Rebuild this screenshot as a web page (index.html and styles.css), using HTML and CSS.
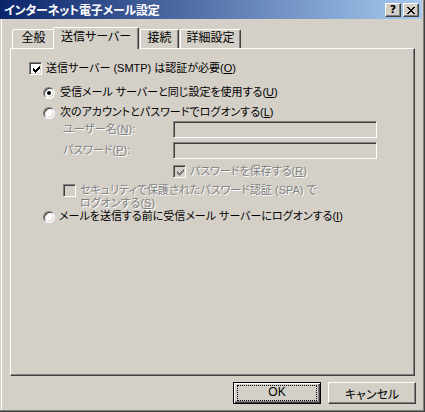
FILE: index.html
```html
<!doctype html>
<html>
  <head>
    <meta charset="utf-8">
    <title>インターネット電子メール設定</title>
    <link rel="stylesheet" href="styles.css">
  </head>

  <body>
    <div class="window">
      <div class="titlebar">
        <span class="title">インターネット電子メール設定</span>
        <div class="capButtons">
          <span class="capBtn help">?</span>
          <span class="capBtn close">
            <svg width="8" height="7" viewBox="0 0 8 7"><path d="M0 0h2v1H0zM6 0h2v1H6zM1 1h2v1H1zM5 1h2v1H5zM2 2h4v1H2zM3 3h2v1H3zM2 4h4v1H2zM1 5h2v1H1zM5 5h2v1H5zM0 6h2v1H0zM6 6h2v1H6z"/></svg>
          </span>
        </div>
      </div>

      <div class="body">
        <div class="tabs">
          <div class="tab tabGeneral">全般</div>
          <div class="tab active tabServer">送信サーバー</div>
          <div class="tab tabConnect">接続</div>
          <div class="tab tabAdvanced">詳細設定</div>
        </div>

        <div class="panel">
          <div class="row rowAuth">
            <span class="check"><svg width="7" height="7" viewBox="0 0 7 7"><path d="M0 2h1v3H0zM1 3h1v3H1zM2 4h1v3H2zM3 3h1v3H3zM4 2h1v3H4zM5 1h1v3H5zM6 0h1v3H6z"/></svg></span>
            <span class="label">送信サーバー (SMTP) は認証が必要(<u>O</u>)</span>
          </div>

          <div class="row radioRow rowSame">
            <span class="radio on"></span>
            <span class="label">受信メール サーバーと同じ設定を使用する(<u>U</u>)</span>
          </div>

          <div class="row radioRow rowAccount">
            <span class="radio"></span>
            <span class="label">次のアカウントとパスワードでログオンする(<u>L</u>)</span>
          </div>

          <div class="row fieldRow rowUser">
            <span class="fieldLabel disabled">ユーザー名(<u>N</u>):</span>
            <span class="textbox"></span>
          </div>

          <div class="row fieldRow rowPass">
            <span class="fieldLabel disabled">パスワード(<u>P</u>):</span>
            <span class="textbox"></span>
          </div>

          <div class="row rowSave">
            <span class="check off"><svg width="7" height="7" viewBox="0 0 7 7"><path d="M0 2h1v3H0zM1 3h1v3H1zM2 4h1v3H2zM3 3h1v3H3zM4 2h1v3H4zM5 1h1v3H5zM6 0h1v3H6z"/></svg></span>
            <span class="label disabled">パスワードを保存する(<u>R</u>)</span>
          </div>

          <div class="row rowSpa">
            <span class="check off"></span>
            <span class="label disabled">セキュリティで保護されたパスワード認証 (SPA) で<br>ログオンする(<u>S</u>)</span>
          </div>

          <div class="row radioRow rowBefore">
            <span class="radio"></span>
            <span class="label">メールを送信する前に受信メール サーバーにログオンする(<u>I</u>)</span>
          </div>
        </div>

        <div class="buttons">
          <button class="btn default"><span class="focus">OK</span></button>
          <button class="btn">キャンセル</button>
        </div>
      </div>
    </div>
  </body>
</html>
```

FILE: styles.css
```css
body {
  margin:0;
  font-family:"Liberation Sans", "Noto Sans CJK JP", sans-serif;
  font-size:11px;
  font-feature-settings:"palt";
  color:#000;
  background:#d4d0c8;
}

u {
  text-decoration:underline;
  text-underline-offset:1px;
}

.window {
  width:425px;
  height:412px;
  box-sizing:border-box;
  background:#d4d0c8;
  border-right:1px solid #404040;
  border-bottom:1px solid #404040;
  box-shadow:inset -1px -1px #808080, inset 1px 0 #d4d0c8, inset 2px 0 #fff;
}

.titlebar {
  width:422px;
  height:19px;
  display:flex;
  justify-content:space-between;
  background:linear-gradient(to right, #0a246a, #a6caf0);
}

.title {
  padding-left:4px;
  padding-top:3px;
  line-height:16px;
  font-size:12px;
  color:#fff;
  font-weight:bold;
  letter-spacing:-0.2px;
}

.capButtons {
  display:flex;
  gap:2px;
  padding-top:3px;
  padding-right:3px;
}

.capBtn {
  width:16px;
  height:14px;
  box-sizing:border-box;
  display:flex;
  align-items:center;
  justify-content:center;
  background:#d4d0c8;
  border:1px solid;
  border-color:#fff #404040 #404040 #fff;
  box-shadow:inset -1px -1px #808080;
}

.help {
  font-family:"DejaVu Sans", sans-serif;
  font-weight:bold;
  font-size:11px;
  line-height:12px;
}

.body {
  padding-left:10px;
  width:405px;
}

.tabs {
  display:flex;
  align-items:flex-start;
  height:21px;
  margin-top:8px;
}

.tab {
  position:relative;
  box-sizing:border-box;
  height:19px;
  margin-top:2px;
  text-align:center;
  line-height:17px;
  font-size:12px;
  background:#d4d0c8;
  border-top:1px solid #fff;
  border-left:1px solid #fff;
  border-right:1px solid #404040;
  border-radius:2px 2px 0 0;
  box-shadow:inset -1px 0 #808080;
}

.tabGeneral {
  width:43px;
  margin-left:2px;
}

.tab.active {
  z-index:1;
  height:22px;
  margin-top:0;
  margin-left:-2px;
  width:86px;
  line-height:19px;
}

.tabConnect {
  width:39px;
  margin-left:1px;
}

.tabAdvanced {
  width:61px;
  margin-left:1px;
}

.panel {
  box-sizing:border-box;
  width:405px;
  height:328px;
  padding-top:13px;
  border-top:1px solid #fff;
  border-left:1px solid #fff;
  border-right:1px solid #404040;
  border-bottom:1px solid #404040;
  box-shadow:inset -1px -1px #808080;
}

.row {
  display:flex;
  align-items:center;
  height:13px;
  line-height:13px;
  white-space:nowrap;
}

.rowAuth { padding-left:18px; }
.radioRow { padding-left:32px; }
.rowSame { margin-top:11px; }
.rowAccount { margin-top:7px; }
.rowBefore { margin-top:0; }

.fieldRow {
  padding-left:52px;
  height:17px;
}
.rowUser { margin-top:2px; }
.rowPass { margin-top:4px; }

.fieldLabel {
  width:110px;
}

.rowSave {
  padding-left:162px;
  margin-top:6px;
}

.rowSpa {
  padding-left:52px;
  margin-top:6px;
  height:26px;
  align-items:flex-start;
}

.label {
  margin-left:4px;
}

.radioRow .label {
  margin-left:5px;
}

.rowBefore .label {
  margin-left:4px;
}

.disabled {
  color:#808080;
  text-shadow:1px 1px #fff;
}

.check {
  width:13px;
  height:13px;
  flex:none;
  box-sizing:border-box;
  display:flex;
  align-items:center;
  justify-content:center;
  background:#fff;
  border:1px solid;
  border-color:#808080 #fff #fff #808080;
  box-shadow:inset 1px 1px #404040, inset -1px -1px #d4d0c8;
}

.check svg {
  fill:#000;
  margin:1px 0 0 1px;
}

.check.off {
  background:#d4d0c8;
}

.check.off svg {
  fill:#808080;
}

.radio {
  width:12px;
  height:12px;
  flex:none;
  box-sizing:border-box;
  display:flex;
  align-items:center;
  justify-content:center;
  border-radius:50%;
  background:#fff;
  border:1px solid;
  border-color:#808080 #fff #fff #808080;
  box-shadow:inset 1px 1px #404040, inset -1px -1px #d4d0c8;
}

.radio.on::after {
  content:"";
  width:4px;
  height:4px;
  border-radius:50%;
  background:#000;
}

.textbox {
  width:204px;
  height:17px;
  box-sizing:border-box;
  background:#d4d0c8;
  border:1px solid;
  border-color:#808080 #fff #fff #808080;
  box-shadow:inset 1px 1px #404040, inset -1px -1px #d4d0c8;
}

.buttons {
  display:flex;
  justify-content:flex-end;
  gap:7px;
  margin-top:6px;
  margin-right:-1px;
}

.btn {
  width:88px;
  height:22px;
  padding:0;
  box-sizing:border-box;
  font:inherit;
  font-size:12px;
  color:#000;
  background:#d4d0c8;
  border:1px solid;
  border-color:#fff #404040 #404040 #fff;
  box-shadow:inset -1px -1px #808080;
}

.btn.default {
  border:1px solid #000;
  box-shadow:inset 1px 1px #fff, inset -1px -1px #404040, inset -2px -2px #808080;
}

.focus {
  display:block;
  margin:0 3px;
  height:14px;
  line-height:13px;
  border:1px dotted #000;
}
```
